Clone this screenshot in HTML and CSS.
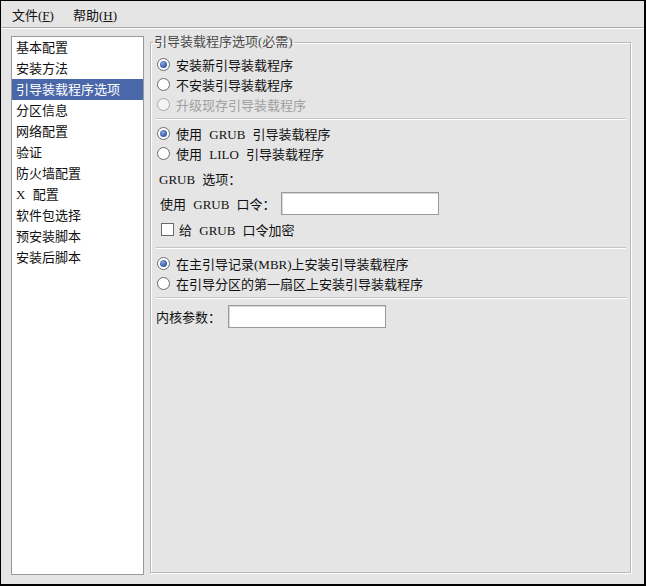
FILE: index.html
```html
<!DOCTYPE html>
<html lang="zh-CN">
<head>
    <meta charset="UTF-8">
    <title>引导装载程序选项</title>
    <link rel="stylesheet" href="styles.css">
</head>
<body>

<div class="window">
    <div class="menubar">
        <span class="menu">文件(<u>F</u>)</span>
        <span class="menu">帮助(<u>H</u>)</span>
    </div>

    <div class="main">
        <!-- Steps list -->
        <ul class="steps">
            <li>基本配置</li>
            <li>安装方法</li>
            <li class="selected">引导装载程序选项</li>
            <li>分区信息</li>
            <li>网络配置</li>
            <li>验证</li>
            <li>防火墙配置</li>
            <li>X 配置</li>
            <li>软件包选择</li>
            <li>预安装脚本</li>
            <li>安装后脚本</li>
        </ul>

        <!-- Bootloader options -->
        <fieldset class="frame">
            <legend>引导装载程序选项(必需)</legend>

            <div class="opt"><span class="radio on"></span>安装新引导装载程序</div>
            <div class="opt"><span class="radio"></span>不安装引导装载程序</div>
            <div class="opt disabled"><span class="radio"></span>升级现存引导装载程序</div>

            <div class="sep"></div>

            <div class="opt"><span class="radio on"></span>使用 GRUB 引导装载程序</div>
            <div class="opt"><span class="radio"></span>使用 LILO 引导装载程序</div>

            <div class="label-row">GRUB 选项：</div>
            <div class="field-row grub-pass">
                <span>使用 GRUB 口令：</span>
                <span class="entry"></span>
            </div>
            <div class="check-row"><span class="check"></span>给 GRUB 口令加密</div>

            <div class="sep wide"></div>

            <div class="opt mbr"><span class="radio on"></span>在主引导记录(MBR)上安装引导装载程序</div>
            <div class="opt"><span class="radio"></span>在引导分区的第一扇区上安装引导装载程序</div>

            <div class="sep"></div>

            <div class="field-row kernel">
                <span>内核参数：</span>
                <span class="entry"></span>
            </div>
        </fieldset>
    </div>
</div>

</body>
</html>
```

FILE: styles.css
```css
body {
    margin: 0;
    font-family: "Liberation Serif", "Noto Sans CJK SC", serif;
    font-size: 13px;
    color: #111;
    background-color: #e5e5e5;
}

.window {
    width: 646px;
    height: 586px;
    box-sizing: border-box;
    border: 1px solid #000;
    border-right-width: 2px;
    border-bottom-width: 2px;
    background-color: #e5e5e5;
    display: flex;
    flex-direction: column;
}

/* Menu bar */
.menubar {
    height: 26px;
    display: flex;
    align-items: center;
    gap: 19px;
    padding: 0 11px;
    border-bottom: 1px solid #a8a8a8;
    box-shadow: 0 1px 0 #fff;
}

.menu u {
    text-decoration-thickness: 1px;
    text-underline-offset: 1px;
}

.main {
    flex: 1;
    display: flex;
    padding: 8px 13px 9px 10px;
    min-height: 0;
}

/* Steps list */
.steps {
    list-style: none;
    margin: 0;
    padding: 0;
    width: 133px;
    box-sizing: border-box;
    background: #fff;
    border: 1px solid #999;
    flex-shrink: 0;
}

.steps li {
    height: 21px;
    line-height: 21px;
    padding-left: 4px;
    word-spacing: 4px;
    white-space: nowrap;
}

.steps li.selected {
    background-color: #4a68a9;
    color: #fff;
}

/* Frame */
.frame {
    flex: 1;
    margin: -2px 0 2px 6px;
    padding: 4px 4px 0 5px;
    min-width: 0;
    border: 1px solid #b8b8b8;
    box-shadow: 1px 1px 0 #fff, inset 1px 1px 0 #fff;
}

.frame legend {
    padding: 0 1px;
    margin-left: -3px;
    line-height: 16px;
    color: #4a4a4a;
}

.opt {
    height: 20px;
    display: flex;
    align-items: center;
    padding-left: 1px;
    word-spacing: 4px;
    white-space: pre;
}

.opt.disabled {
    color: #a0a0a0;
}

.radio {
    width: 13px;
    height: 13px;
    box-sizing: border-box;
    border-radius: 50%;
    border: 1px solid #6a6a6a;
    background: #fff;
    margin-right: 6px;
    position: relative;
    flex-shrink: 0;
}

.opt.disabled .radio {
    border-color: #a8a8a8;
    background: #f4f4f4;
}

.radio.on::after {
    content: "";
    position: absolute;
    left: 2px;
    top: 2px;
    width: 7px;
    height: 7px;
    border-radius: 50%;
    background: radial-gradient(circle at 40% 35%, #8fa8dc 0, #3c5fae 60%, #2e4f99 100%);
}

.sep {
    height: 1px;
    background: #c4c4c4;
    border-bottom: 1px solid #fff;
    margin: 4px 0 3px;
}

.sep.wide {
    margin-top: 8px;
}

.label-row {
    height: 20px;
    line-height: 20px;
    margin-top: 7px;
    padding-left: 3px;
    word-spacing: 4px;
}

.field-row {
    display: flex;
    align-items: center;
    word-spacing: 4px;
}

.grub-pass {
    margin-top: 2px;
    padding-left: 4px;
}

.entry {
    width: 158px;
    height: 23px;
    box-sizing: border-box;
    background: #fff;
    border: 1px solid #9a9a9a;
    box-shadow: inset 1px 1px 0 #d8d8d8;
}

.grub-pass .entry {
    margin-left: 5px;
}

.check-row {
    height: 20px;
    display: flex;
    align-items: center;
    margin-top: 4px;
    padding-left: 5px;
    word-spacing: 4px;
}

.check {
    width: 13px;
    height: 13px;
    box-sizing: border-box;
    border: 1px solid #6a6a6a;
    background: #fff;
    margin-right: 5px;
}

.mbr {
    margin-top: 4px;
}

.kernel {
    margin-top: 6px;
    padding-left: 0;
}

.kernel .entry {
    margin-left: 7px;
}
```
